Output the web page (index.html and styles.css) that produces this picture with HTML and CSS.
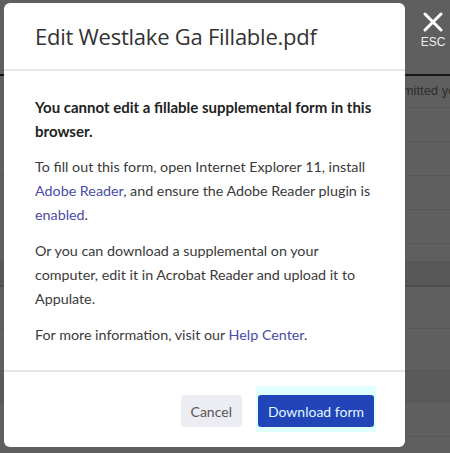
FILE: index.html
```html
<!DOCTYPE html>
<html lang="en">
<head>
  <meta charset="UTF-8" />
  <meta name="viewport" content="width=device-width, initial-scale=1.0"/>
  <title>Edit Westlake Ga Fillable.pdf</title>
  <link rel="stylesheet" href="styles.css">
</head>
<body>

<div class="page">
  <div class="page-top"></div>
  <div class="page-row first"><span class="cell-text">Last submitted year</span></div>
  <div class="page-row"></div>
  <div class="page-row"></div>
  <div class="page-row"></div>
  <div class="page-row"></div>
  <div class="page-row short"></div>
  <div class="page-row band"></div>
  <div class="page-row tall"></div>
  <div class="page-row tall"></div>
  <div class="page-row band wide"></div>
  <div class="page-row"></div>
</div>

<div class="overlay">
  <button class="close-btn" type="button">
    <svg width="20" height="20" viewBox="0 0 20 20">
      <path d="M2 2 L18 18 M18 2 L2 18" stroke="#fff" stroke-width="3" stroke-linecap="round" />
    </svg>
    <span class="close-label">ESC</span>
  </button>

  <div class="modal">
    <div class="modal-header">
      <h2>Edit Westlake Ga Fillable.pdf</h2>
    </div>

    <div class="modal-body">
      <p class="warning">You cannot edit a fillable supplemental form in this browser.</p>
      <p>To fill out this form, open Internet Explorer 11, install <a href="#">Adobe Reader</a>, and ensure the Adobe Reader plugin is <a href="#">enabled</a>.</p>
      <p>Or you can download a supplemental on your computer, edit it in Acrobat Reader and upload it to Appulate.</p>
      <p>For more information, visit our <a href="#">Help Center</a>.</p>
    </div>

    <div class="modal-footer">
      <button class="btn btn-cancel" type="button">Cancel</button>
      <span class="focus-ring">
        <button class="btn btn-primary" type="button">Download form</button>
      </span>
    </div>
  </div>
</div>

</body>
</html>
```

FILE: styles.css
```css
  body {
    margin: 0;
    font-family: "Open Sans", "Noto Sans", Arial, sans-serif;
    background: #5f5f5f;
    height: 453px;
    overflow: hidden;
  }

  /* page behind the dialog, already dimmed */
  .page {
    display: flex;
    flex-direction: column;
  }

  .page-top {
    height: 74px;
    border-bottom: 2px solid #161616;
  }

  .page-row {
    height: 33px;
    border-bottom: 1px solid #575757;
    display: flex;
    align-items: center;
    justify-content: flex-end;
  }

  .page-row.first {
    height: 31px;
  }

  .page-row.short {
    height: 17px;
  }

  .page-row.band {
    height: 23px;
    background: #575757;
    border-bottom: 2px solid #4c4c4c;
  }

  .page-row.tall {
    height: 41px;
  }

  .page-row.wide {
    height: 31px;
    background: #5a5a5a;
    border-bottom: 1px solid #595959;
  }

  .cell-text {
    font-family: "Liberation Sans", Arial, sans-serif;
    font-size: 13px;
    color: #2e2e2e;
    white-space: nowrap;
    margin-right: -17px;
    padding-bottom: 2px;
  }

  .overlay {
    position: absolute;
    inset: 0;
  }

  .close-btn {
    position: absolute;
    top: 12px;
    right: 0;
    width: 34px;
    padding: 0;
    border: none;
    background: none;
    display: flex;
    flex-direction: column;
    align-items: center;
    gap: 3px;
  }

  .close-label {
    font-family: "Liberation Sans", Arial, sans-serif;
    font-size: 12px;
    color: #eeeeee;
  }

  .modal {
    position: absolute;
    left: 4px;
    top: 3px;
    width: 401px;
    height: 444px;
    background: #fff;
    border-radius: 6px;
    display: flex;
    flex-direction: column;
    color: #3a3a3a;
  }

  .modal-header {
    padding: 18px 31px 18px;
    border-bottom: 2px solid #e6e6e6;
  }

  .modal-header h2 {
    margin: 0;
    font-size: 22px;
    font-weight: 500;
    line-height: 30px;
    color: #333;
    letter-spacing: -0.25px;
  }

  .modal-body {
    flex: 1;
    padding: 24px 31px 11px;
    font-family: Lato, "Open Sans", sans-serif;
    font-size: 14.3px;
    line-height: 24px;
  }

  .modal-body p {
    margin: 0 0 12px;
  }

  .modal-body .warning {
    font-size: 15px;
    font-weight: 700;
    color: #222;
  }

  .modal-body a {
    color: #4b4ba8;
    text-decoration: none;
  }

  .modal-footer {
    border-top: 2px solid #e6e6e6;
    padding: 23px 30px 21px;
    display: flex;
    justify-content: flex-end;
    align-items: center;
    gap: 15px;
    font-family: Lato, "Open Sans", sans-serif;
  }

  .focus-ring {
    display: flex;
    padding: 9px 2px 5px;
    margin: -9px -1px -5px;
    background: #e0ffff;
  }

  .btn {
    font-family: inherit;
    font-size: 14px;
    height: 32px;
    padding: 0 10px;
    border: none;
    border-radius: 3px;
  }

  .btn-cancel {
    background: #ececf3;
    color: #555;
  }

  .btn-primary {
    background: #2145b8;
    color: #e2f7ff;
    padding: 0 10px;
  }
```
